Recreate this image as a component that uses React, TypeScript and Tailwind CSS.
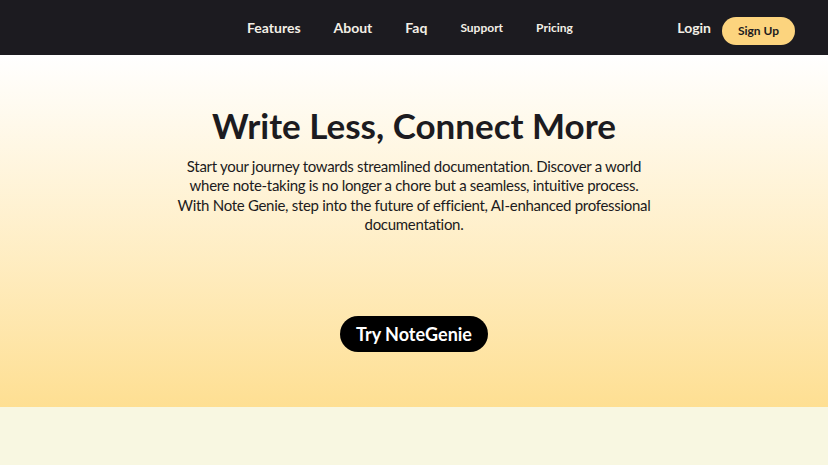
import React from "react";

const font = { fontFamily: 'Lato, "Noto Sans", sans-serif' };

function Navbar() {
  return (
    <header className="flex h-[55px] items-center bg-[#1c1b20] pl-[247px] pr-[33px] text-[#f3efe6]">
      <nav className="flex items-center gap-[33px] font-bold">
        <a className="text-[14px]">Features</a>
        <a className="text-[14px]">About</a>
        <a className="text-[14px]">Faq</a>
        <a className="text-[12px]">Support</a>
        <a className="text-[12px]">Pricing</a>
      </nav>
      <div className="ml-auto flex items-center gap-[11px]">
        <a className="text-[14px] font-bold">Login</a>
        <button className="mt-[6px] h-[28px] w-[73px] rounded-full bg-[#fcd47e] text-[12px] font-bold text-[#1c1b20]">
          Sign Up
        </button>
      </div>
    </header>
  );
}

function Hero() {
  return (
    <section className="flex h-[352px] flex-col items-center bg-gradient-to-b from-white to-[#fedf92] pt-[48px]">
      <h1 className="text-[35px] font-bold leading-[44px] text-[#1c1b20]">
        Write Less, Connect More
      </h1>
      <p className="mt-[10px] text-center text-[15px] leading-[19.3px] tracking-[-0.3px] text-[#1c1b20]">
        Start your journey towards streamlined documentation. Discover a world
        <br />
        where note-taking is no longer a chore but a seamless, intuitive process.
        <br />
        With Note Genie, step into the future of efficient, AI-enhanced professional
        <br />
        documentation.
      </p>
      <button className="mt-[82px] h-[36px] w-[148px] rounded-full bg-black text-[18px] font-bold text-white">
        Try NoteGenie
      </button>
    </section>
  );
}

export default function App() {
  return (
    <div className="min-h-[465px] bg-[#f8f7e1]" style={font}>
      <Navbar />
      <Hero />
    </div>
  );
}
